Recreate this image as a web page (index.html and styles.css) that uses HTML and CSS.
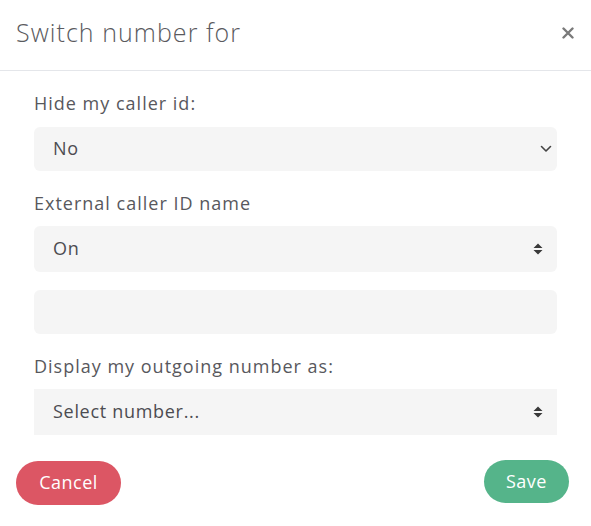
FILE: index.html
```html
<!DOCTYPE html>
<html>
<head>
<meta charset="utf-8">
<link rel="stylesheet" href="styles.css">
</head>
<body>
<div class="modal">
  <div class="header">
    <h1 class="title">Switch number for</h1>
    <svg class="close" width="12" height="12" viewBox="0 0 12 12"><path d="M1.5 1.5 L10.5 10.5 M10.5 1.5 L1.5 10.5" stroke="#7a7a7a" stroke-width="2.4" stroke-linecap="round"/></svg>
  </div>
  <div class="body">
    <div class="label l1">Hide my caller id:</div>
    <div class="field sel r">
      <span>No</span>
      <svg class="chev" width="12" height="8" viewBox="0 0 12 8"><path d="M1.5 1.5 L6 6 L10.5 1.5" fill="none" stroke="#444" stroke-width="1.6" stroke-linecap="round" stroke-linejoin="round"/></svg>
    </div>
    <div class="label l2">External caller ID name</div>
    <div class="field sel r tall">
      <span>On</span>
      <svg class="ud" width="10" height="12" viewBox="0 0 10 12"><path d="M5 0.5 L9.5 5 L0.5 5 Z M0.5 7 L9.5 7 L5 11.5 Z" fill="#3a3a3a"/></svg>
    </div>
    <div class="field input r"></div>
    <div class="label l3">Display my outgoing number as:</div>
    <div class="field sel tall">
      <span>Select number...</span>
      <svg class="ud" width="10" height="12" viewBox="0 0 10 12"><path d="M5 0.5 L9.5 5 L0.5 5 Z M0.5 7 L9.5 7 L5 11.5 Z" fill="#3a3a3a"/></svg>
    </div>
  </div>
  <div class="footer">
    <button class="btn cancel">Cancel</button>
    <button class="btn save">Save</button>
  </div>
</div>
</body>
</html>
```
FILE: styles.css
```css
* { box-sizing: border-box; }
html, body { margin: 0; padding: 0; background: #fff; }
body { font-family: "Open Sans", "Noto Sans", sans-serif; color: #4a4a4a; }
.modal { width: 591px; height: 526px; }
.header {
  height: 71px;
  border-bottom: 1px solid #e4e6ea;
  display: flex;
  align-items: center;
  justify-content: space-between;
  padding: 0 16px 7px 16px;
}
.title {
  margin: 0;
  font-weight: 300;
  font-size: 25px;
  letter-spacing: 1.05px;
  color: #5a5a5e;
}
.close { margin-right: 1px; margin-top: 2px; }
.body { padding: 20px 34px 0 34px; }
.label {
  font-size: 18px;
  line-height: 24px;
  color: #58585d;
  letter-spacing: 1px;
}
.l1 { margin-bottom: 12px; }
.l2 { margin-top: 20px; margin-bottom: 11px; }
.l3 { margin-top: 20px; margin-bottom: 11px; }
.field {
  background: #f5f5f5;
  height: 44px;
  display: flex;
  align-items: center;
  justify-content: space-between;
  padding: 0 18px 0 19px;
  font-size: 18px;
  color: #4c4c51;
  letter-spacing: 0.7px;
}
.field.r { border-radius: 6px; }
.field.tall { height: 46px; padding-right: 14px; }
.field.input { margin-top: 18px; }
.sel span { margin-top: -2px; }
.chev { margin-right: -13px; }
.footer {
  display: flex;
  justify-content: space-between;
  align-items: flex-start;
  padding: 25px 22px 0 16px;
}
.btn {
  border: none;
  border-radius: 22px;
  color: #fff;
  font-family: "Open Sans", "Noto Sans", sans-serif;
  font-size: 18px;
  letter-spacing: 0.5px;
  height: 44px;
  padding: 0 0 2px 0;
}
.cancel { background: #dc5664; width: 105px; margin-top: 1px; }
.save { background: #55b48a; width: 85px; height: 43px; }
```
